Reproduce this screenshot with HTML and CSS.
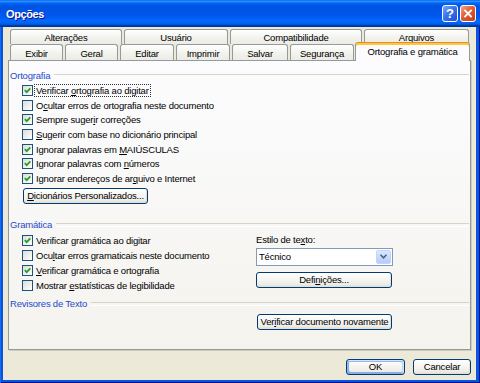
FILE: index.html
```html
<!DOCTYPE html>
<html lang="pt">
<head>
<meta charset="utf-8">
<title>Opções</title>
<link rel="stylesheet" href="styles.css">
</head>
<body>
<div class="window">
  <div class="titlebar">
    <span class="title">Opções</span>
    <div class="tb-buttons">
      <span class="tb-btn tb-help">?</span>
      <span class="tb-btn tb-close"><svg viewBox="0 0 14 15" width="14" height="15"><path d="M4 4.5 L10 10.5 M10 4.5 L4 10.5" stroke="#fff" stroke-width="1.8" stroke-linecap="square"/></svg></span>
    </div>
  </div>
  <div class="client">
    <div class="tabrow tabrow-back">
      <div class="tab t-alt">Alterações</div>
      <div class="tab t-usu">Usuário</div>
      <div class="tab t-comp">Compatibilidade</div>
      <div class="tab t-arq">Arquivos</div>
    </div>
    <div class="tabrow tabrow-front">
      <div class="tab t-exi">Exibir</div>
      <div class="tab t-ger">Geral</div>
      <div class="tab t-edi">Editar</div>
      <div class="tab t-imp">Imprimir</div>
      <div class="tab t-sal">Salvar</div>
      <div class="tab t-seg">Segurança</div>
      <div class="tab tab-sel t-ort">Ortografia e gramática</div>
    </div>
    <div class="panel">
      <div class="group-head">Ortografia</div>
      <ul class="checks">
        <li><span class="cb"><svg viewBox="0 0 9 9" width="9" height="9"><path d="M1.8 4.2 L3.7 6.2 L7.3 2.4" fill="none" stroke="#21A121" stroke-width="1.7"/></svg></span><span class="focus">Verificar <u>o</u>rtografia ao digitar</span></li>
        <li><span class="cb"></span><span>O<u>c</u>ultar erros de ortografia neste documento</span></li>
        <li><span class="cb"><svg viewBox="0 0 9 9" width="9" height="9"><path d="M1.8 4.2 L3.7 6.2 L7.3 2.4" fill="none" stroke="#21A121" stroke-width="1.7"/></svg></span><span>Sempre suger<u>i</u>r correções</span></li>
        <li><span class="cb"></span><span><u>S</u>ugerir com base no dicionário principal</span></li>
        <li><span class="cb"><svg viewBox="0 0 9 9" width="9" height="9"><path d="M1.8 4.2 L3.7 6.2 L7.3 2.4" fill="none" stroke="#21A121" stroke-width="1.7"/></svg></span><span>Ignorar palavras em <u>M</u>AIÚSCULAS</span></li>
        <li><span class="cb"><svg viewBox="0 0 9 9" width="9" height="9"><path d="M1.8 4.2 L3.7 6.2 L7.3 2.4" fill="none" stroke="#21A121" stroke-width="1.7"/></svg></span><span>Ignorar palavras com <u>n</u>úmeros</span></li>
        <li><span class="cb"><svg viewBox="0 0 9 9" width="9" height="9"><path d="M1.8 4.2 L3.7 6.2 L7.3 2.4" fill="none" stroke="#21A121" stroke-width="1.7"/></svg></span><span>Ignorar endereços de ar<u>q</u>uivo e Internet</span></li>
      </ul>
      <button class="btn btn-dict"><u>D</u>icionários Personalizados...</button>

      <div class="group-head group-head-gram">Gramática</div>
      <div class="gram">
        <ul class="checks">
          <li><span class="cb"><svg viewBox="0 0 9 9" width="9" height="9"><path d="M1.8 4.2 L3.7 6.2 L7.3 2.4" fill="none" stroke="#21A121" stroke-width="1.7"/></svg></span><span>Verificar gramática ao digitar</span></li>
          <li><span class="cb"></span><span>Ocu<u>l</u>tar erros gramaticais neste documento</span></li>
          <li><span class="cb"><svg viewBox="0 0 9 9" width="9" height="9"><path d="M1.8 4.2 L3.7 6.2 L7.3 2.4" fill="none" stroke="#21A121" stroke-width="1.7"/></svg></span><span><u>V</u>erificar gramática e ortografia</span></li>
          <li><span class="cb"></span><span>Mostrar <u>e</u>statísticas de legibilidade</span></li>
        </ul>
        <div class="style-col">
          <span class="style-label">Estilo de te<u>x</u>to:</span>
          <div class="select">
            <span class="select-text">Técnico</span>
            <span class="dd"><svg viewBox="0 0 9 7" width="9" height="7"><path d="M1.5 1.8 L4.5 4.8 L7.5 1.8" fill="none" stroke="#4D6185" stroke-width="1.6"/></svg></span>
          </div>
          <button class="btn btn-def">Defi<u>n</u>ições...</button>
        </div>
      </div>

      <div class="group-head group-head-rev">Revisores de Texto</div>
      <button class="btn btn-recheck">Ver<u>i</u>ficar documento novamente</button>
    </div>
    <div class="footer">
      <button class="btn btn-ok">OK</button>
      <button class="btn btn-cancel">Cancelar</button>
    </div>
  </div>
</div>
</body>
</html>
```

FILE: styles.css
```css
* { box-sizing: border-box; }
html, body { margin: 0; padding: 0; }
body {
  width: 480px;
  height: 383px;
  overflow: hidden;
  font-family: "Liberation Sans", Arial, sans-serif;
  font-size: 9.5px;
  letter-spacing: -0.2px;
  color: #000;
  background: #fff;
}
u { text-decoration: underline; text-underline-offset: 1px; }

.window {
  width: 480px;
  height: 383px;
  display: flex;
  flex-direction: column;
  background: #0A54E4;
  box-shadow: inset 1px 0 #166AEE, inset -1px -1px #00138C, inset 2px 0 #0855DD;
}

.titlebar {
  height: 27px;
  flex: none;
  display: flex;
  align-items: flex-start;
  padding: 0 4px 0 6px;
  background: linear-gradient(to bottom, #0058EE 0%, #3593FF 4%, #288EFF 6%, #127DFF 8%, #036FFC 10%, #0262EE 14%, #0057E5 20%, #0054E3 24%, #0055EB 56%, #005BF5 66%, #026AFE 76%, #0062EF 86%, #0052D6 92%, #0040AB 94%, #003092 100%);
}
.title {
  flex: 1;
  margin-top: 8px;
  line-height: 13px;
  font-weight: bold;
  font-size: 11px;
  letter-spacing: -0.4px;
  color: #fff;
  text-shadow: 1px 1px #0F1089;
}
.tb-buttons { display: flex; gap: 2px; margin-top: 5px; }
.tb-btn {
  width: 16px;
  height: 17px;
  border: 1px solid #fff;
  border-radius: 3px;
  display: flex;
  align-items: center;
  justify-content: center;
}
.tb-help {
  background: linear-gradient(135deg, #7AA8FA 0%, #3A74EC 45%, #1D50D8 100%);
  color: #fff;
  font-weight: bold;
  font-size: 13px;
  letter-spacing: 0;
  line-height: 15px;
}
.tb-close {
  background: linear-gradient(135deg, #F3A68C 0%, #E35D33 45%, #C33A1A 100%);
}

.client {
  flex: 1;
  margin: 0 4px 3px 3px;
  background: #ECE9D8;
  padding-top: 2px;
  display: flex;
  flex-direction: column;
}

.tabrow { display: flex; gap: 2px; margin-left: 7px; flex: none; }
.tabrow-back { height: 15px; }
.tabrow-front { height: 16px; align-items: flex-end; }
.tab {
  height: 100%;
  border: 1px solid #919B9C;
  border-bottom: none;
  border-radius: 3px 3px 0 0;
  background: linear-gradient(#FFFFFF, #F4F4F0 45%, #ECEBE5);
  text-align: center;
  line-height: 13px;
  white-space: nowrap;
}
.tabrow-back .tab { padding-top: 1px; }
.tabrow-front .tab { height: 16px; padding-top: 2px; }
.tabrow-front .tab-sel {
  height: 19px;
  margin-left: -1px;
  margin-bottom: -1px;
  padding-top: 0;
  position: relative;
  z-index: 2;
  background: #FCFCFE;
  border-top: 1px solid #E68B2C;
  box-shadow: inset 0 2px #FFC73C;
  line-height: 14px;
  padding-top: 2px;
}
.t-alt { width: 112px; }
.t-usu { width: 104px; }
.t-comp { width: 132px; }
.t-arq { width: 105px; }
.t-exi { width: 53px; }
.t-ger { width: 53px; }
.t-edi { width: 54px; }
.t-imp { width: 54px; }
.t-sal { width: 56px; }
.t-seg { width: 64px; }
.t-ort { width: 115px; }

.panel {
  flex: none;
  margin-left: 5px;
  width: 463px;
  height: 290px;
  border: 1px solid #919B9C;
  background: linear-gradient(#FCFCFE, #F4F3EE);
  box-shadow: 1px 1px #D0CDBF;
  padding: 9px 1px 0 1px;
}
.group-head {
  display: flex;
  align-items: center;
  gap: 4px;
  height: 11px;
  line-height: 11px;
  color: #1F4BCB;
}
.group-head::after {
  content: "";
  flex: 1;
  height: 2px;
  border-top: 1px solid #D8D5C8;
  border-bottom: 1px solid #FFFFFF;
  margin-top: 1px;
}
.group-head-gram { margin-top: 15px; }
.group-head-rev { margin-top: 5px; }

.checks {
  list-style: none;
  margin: 2px 0 0;
  padding: 0 0 0 12px;
}
.checks li {
  height: 14.7px;
  display: flex;
  align-items: center;
  gap: 2px;
  white-space: nowrap;
}
.cb {
  flex: none;
  width: 11px;
  height: 11px;
  border: 1px solid #1C5180;
  background: linear-gradient(135deg, #DCDCD7, #FFFFFF);
  display: flex;
  align-items: center;
  justify-content: center;
  margin-right: 1px;
}
.focus { outline: 1px dotted #333; padding: 0 1px; margin-left: -1px; }

.btn {
  display: block;
  font: inherit;
  letter-spacing: inherit;
  color: #000;
  height: 16px;
  padding: 0;
  line-height: 14px;
  text-align: center;
  border: 1px solid #003C74;
  border-radius: 3px;
  background: linear-gradient(#FFFFFF, #F5F4F0 50%, #ECEBE6 85%, #D8D2C6);
  box-shadow: inset -1px -1px #E3E0D6;
}
.btn-dict { margin: 2px 0 0 13px; width: 125px; }

.gram { display: flex; }
.gram .checks { width: 246px; flex: none; margin-top: 3px; }
.gram .checks li { height: 15px; }
.style-col {
  padding-top: 4px;
  display: flex;
  flex-direction: column;
  align-items: flex-start;
}
.style-label { line-height: 11px; }
.select {
  margin-top: 3px;
  width: 137px;
  height: 18px;
  border: 1px solid #7F9DB9;
  background: #fff;
  display: flex;
  align-items: center;
  padding-left: 2px;
}
.select-text { flex: 1; }
.dd {
  width: 15px;
  height: 14px;
  margin-right: 1px;
  border: 1px solid #C3D3FD;
  border-radius: 2px;
  background: linear-gradient(#DCE7FE, #B7CBF7);
  display: flex;
  align-items: center;
  justify-content: center;
}
.btn-def { margin-top: 6px; width: 136px; }
.btn-recheck { margin: 5px 0 0 247px; width: 135px; }

.footer {
  display: flex;
  justify-content: flex-end;
  gap: 8px;
  margin-top: 9px;
  padding-right: 5px;
}
.btn-ok {
  width: 59px;
  box-shadow: inset -1px 1px #CEE7FF, inset 1px 2px #98B8EA, inset -2px 2px #BCD4F6, inset 1px -1px #89ADE4, inset 2px -2px #89ADE4;
}
.btn-cancel { width: 58px; }
```
